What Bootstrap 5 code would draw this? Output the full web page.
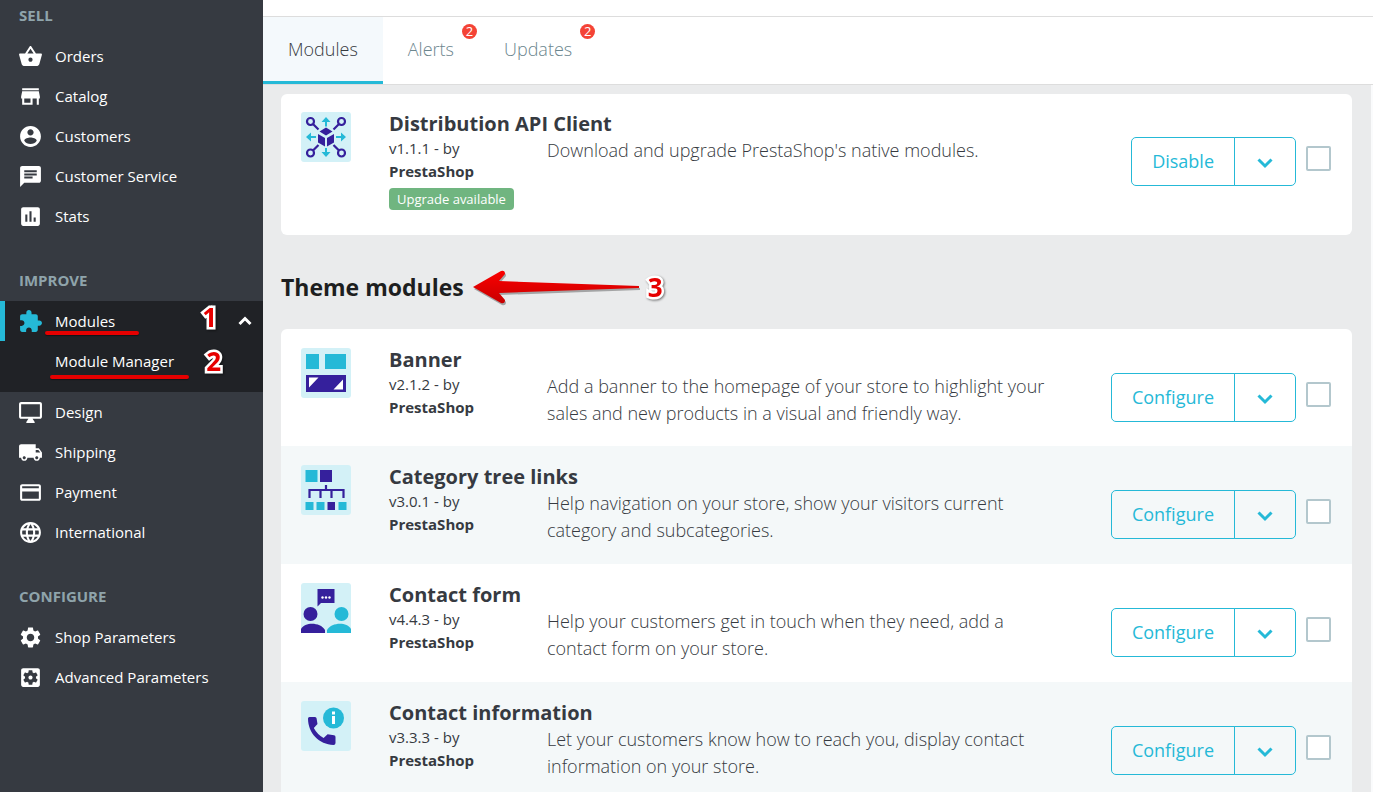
<!DOCTYPE html>
<html lang="en">
<head>
<meta charset="utf-8">
<meta name="viewport" content="width=device-width, initial-scale=1">
<title>Module Manager</title>
<link href="https://cdn.jsdelivr.net/npm/bootstrap@5.3.0/dist/css/bootstrap.min.css" rel="stylesheet">
<style>
  :root { --ps-blue: #25b9d7; --ps-dark: #363a41; --ps-red: #e60000; }
  body { font-family: "Open Sans", "Noto Sans", sans-serif; font-size: 18px; line-height: 27px; color: var(--ps-dark); }

  /* sidebar */
  .side-nav { width: 263px; padding-top: 5px; background: var(--ps-dark); font-size: 15px; line-height: 20px; }
  .side-title { color: #8fa4ab; font-size: 15px; line-height: 20px; font-weight: 700; padding: 0 19px; margin: 0 0 11px; }
  .side-group { margin-bottom: 34px; }
  .side-link { display: flex; align-items: center; height: 40px; padding: 0 10px 0 18px; color: #fff; text-decoration: none; }
  .side-link:hover { color: var(--ps-blue); }
  .side-link .glyph { width: 25px; height: 25px; fill: currentColor; margin-right: 12px; }
  .side-current { background: #202226; padding-bottom: 11px; }
  .side-current > .side-link:first-child { box-shadow: inset 5px 0 0 var(--ps-blue); }
  .side-current .glyph { fill: var(--ps-blue); }
  .side-current .side-sub { padding: 0 42px 0 55px; }

  /* tabs */
  .top-strip { height: 17px; border-bottom: 1px solid #dddddd; }
  .tab-strip { border-bottom: 1px solid #dddddd; }
  .tab-strip .nav-link { position: relative; height: 67px; padding: 19px 25px; font-weight: 340; color: #6c868e; border-bottom: 3px solid transparent; }
  .tab-strip .nav-link.active { color: var(--ps-dark); background: #f4f9fc; border-bottom-color: var(--ps-blue); }
  .tab-count { position: absolute; top: 7px; right: 2px; width: 15px; height: 15px; border-radius: 8px; background: #f44336; color: #fff; font-size: 13px; line-height: 15px; font-weight: 400; text-align: center; }

  /* modules */
  .content-pane { background: #eaebec; padding: 9px 19px 0 18px; border-right: 2px solid #fafbfc; scrollbar-width: none; }
  .section-title { font-size: 23px; line-height: 32px; font-weight: 700; color: #1d1e20; margin: 0; padding: 33px 0 23px; }
  .module-card { border: 0; border-radius: 6px; overflow: hidden; }
  .module-row { display: flex; padding: 19px 21px 19px 20px; min-height: 118px; }
  .module-row:first-child { min-height: 117px; }
  .module-row:only-child { padding-top: 18px; padding-bottom: 25px; }
  .module-row:nth-child(even) { background: #f4f8f9; }
  .module-logo { width: 50px; height: 50px; margin-right: 38px; flex: none; }
  .module-name { font-size: 20px; line-height: 23px; font-weight: 700; margin: 0 0 2px; white-space: nowrap; }
  .module-meta { width: 158px; flex: none; font-size: 15px; line-height: 23px; }
  .module-text { margin: 0; padding-right: 48px; font-weight: 340; }
  .module-flag { font-size: 13px; line-height: 22px; font-weight: 400; padding: 0 8px; margin-top: 5px; background: #70b580; border-radius: 4px; display: block; width: fit-content; }
  .module-actions { margin-top: 25px; display: flex; align-items: flex-start; flex: none; }
  .btn-ps { --bs-btn-color: var(--ps-blue); --bs-btn-border-color: var(--ps-blue); --bs-btn-hover-bg: var(--ps-blue); --bs-btn-hover-color: #fff; --bs-btn-font-size: 18px; --bs-btn-font-weight: 500; --bs-btn-line-height: 27px; --bs-btn-padding-y: 10px; --bs-btn-padding-x: 20px; --bs-btn-border-radius: 5px; }
  .btn-ps svg { width: 20px; height: 12px; }
  .module-tick { width: 25px; height: 25px; margin: 9px 0 0 10px; }
  .module-tick.form-check-input { border: 2px solid #b3c7cd; border-radius: 2px; }

  /* tutorial marks drawn over the page */
  .underline-mark { position: absolute; height: 4px; border-radius: 2px; background: var(--ps-red); box-shadow: 0 1px 1px rgba(0,0,0,.4); }
  .step-mark { font-family: "Open Sans", sans-serif; font-size: 26px; line-height: 30px; font-weight: 700; color: var(--ps-red); -webkit-text-stroke: 5px #fff; paint-order: stroke fill; filter: drop-shadow(1px 1px 1px rgba(0,0,0,.5)); }
</style>
</head>
<body>
<div class="d-flex vh-100 overflow-hidden">

  <nav class="side-nav flex-shrink-0 overflow-hidden" aria-label="Main menu">
    <div class="side-group">
      <h2 class="side-title">SELL</h2>
      <a class="side-link" href="#"><svg class="glyph" viewBox="0 0 24 24"><path d="M17.210 9l-4.380-6.560c-.19-.28-.51-.42-.83-.42-.32 0-.64.14-.83.43L6.790 9H2c-.55 0-1 .45-1 1 0 .09.01.18.04.27l2.540 9.270c.23.84 1 1.460 1.920 1.460h13c.92 0 1.690-.62 1.930-1.460l2.540-9.270L23 10c0-.55-.45-1-1-1h-4.790zM9 9l3-4.400L15 9H9zm3 8c-1.100 0-2-.9-2-2s.9-2 2-2 2 .9 2 2-.9 2-2 2z"/></svg>Orders</a>
      <a class="side-link" href="#"><svg class="glyph" viewBox="0 0 24 24"><path d="M20 4H4v2h16V4zm1 10v-2l-1-5H4l-1 5v2h1v6h10v-6h4v6h2v-6h1zm-9 4H6v-4h6v4z"/></svg>Catalog</a>
      <a class="side-link" href="#"><svg class="glyph" viewBox="0 0 24 24"><path d="M12 2C6.480 2 2 6.480 2 12s4.480 10 10 10 10-4.480 10-10S17.520 2 12 2zm0 3c1.660 0 3 1.340 3 3s-1.340 3-3 3-3-1.340-3-3 1.340-3 3-3zm0 14.200c-2.500 0-4.710-1.280-6-3.220.03-1.990 4-3.080 6-3.080 1.990 0 5.970 1.090 6 3.080-1.290 1.940-3.500 3.220-6 3.220z"/></svg>Customers</a>
      <a class="side-link" href="#"><svg class="glyph" viewBox="0 0 24 24"><path d="M20 2H4c-1.100 0-1.990.9-1.990 2L2 22l4-4h14c1.100 0 2-.9 2-2V4c0-1.100-.9-2-2-2zM6 9h12v2H6V9zm8 5H6v-2h8v2zm4-6H6V6h12v2z"/></svg>Customer Service</a>
      <a class="side-link" href="#"><svg class="glyph" viewBox="0 0 24 24"><path d="M19 3H5c-1.100 0-2 .9-2 2v14c0 1.100.9 2 2 2h14c1.100 0 2-.9 2-2V5c0-1.100-.9-2-2-2zM9 17H7v-7h2v7zm4 0h-2V7h2v10zm4 0h-2v-4h2v4z"/></svg>Stats</a>
    </div>

    <div class="side-group">
      <h2 class="side-title">IMPROVE</h2>
      <div class="side-current">
        <a class="side-link position-relative" href="#"><svg class="glyph" viewBox="0 0 24 24"><path d="M20.500 11H19V7c0-1.100-.9-2-2-2h-4V3.500C13 2.120 11.880 1 10.500 1S8 2.120 8 3.500V5H4c-1.100 0-1.990.9-1.990 2v3.800H3.500c1.490 0 2.700 1.210 2.700 2.700s-1.210 2.700-2.700 2.700H2V20c0 1.100.9 2 2 2h3.800v-1.500c0-1.490 1.210-2.700 2.700-2.700 1.490 0 2.700 1.210 2.700 2.700V22H17c1.100 0 2-.9 2-2v-4h1.500c1.380 0 2.500-1.120 2.500-2.500S21.880 11 20.500 11z"/></svg>Modules
          <span class="step-mark ms-auto me-3 mb-2 pe-1">1</span>
          <svg width="16" height="10" viewBox="0 0 16 10" fill="none" stroke="#fff" stroke-width="3"><path d="M2.500 8L8 2.500 13.500 8"/></svg>
          <span class="underline-mark" style="left:45px;bottom:6px;width:94px"></span>
        </a>
        <a class="side-link side-sub position-relative" href="#">Module Manager
          <span class="step-mark ms-auto">2</span>
          <span class="underline-mark" style="left:50px;bottom:2px;width:139px"></span>
        </a>
      </div>
      <a class="side-link" href="#"><svg class="glyph" viewBox="0 0 24 24"><path d="M21 2H3c-1.100 0-2 .9-2 2v12c0 1.100.9 2 2 2h7l-2 3v1h8v-1l-2-3h7c1.100 0 2-.9 2-2V4c0-1.100-.9-2-2-2zm0 14H3V4h18v12z"/></svg>Design</a>
      <a class="side-link" href="#"><svg class="glyph" viewBox="0 0 24 24"><path d="M20 8h-3V4H3c-1.100 0-2 .9-2 2v11h2c0 1.660 1.340 3 3 3s3-1.340 3-3h6c0 1.660 1.340 3 3 3s3-1.340 3-3h2v-5l-3-4zM6 18.500c-.83 0-1.500-.67-1.500-1.500s.67-1.500 1.500-1.500 1.500.67 1.500 1.500-.67 1.500-1.500 1.500zm13.500-9l1.960 2.500H17V9.500h2.500zm-1.500 9c-.83 0-1.500-.67-1.500-1.500s.67-1.500 1.500-1.500 1.500.67 1.500 1.500-.67 1.500-1.500 1.500z"/></svg>Shipping</a>
      <a class="side-link" href="#"><svg class="glyph" viewBox="0 0 24 24"><path d="M20 4H4c-1.110 0-1.990.89-1.990 2L2 18c0 1.110.89 2 2 2h16c1.110 0 2-.89 2-2V6c0-1.110-.89-2-2-2zm0 14H4v-7h16v7zm0-10H4V6h16v2z"/></svg>Payment</a>
      <a class="side-link" href="#"><svg class="glyph" viewBox="0 0 24 24"><path d="M11.990 2C6.470 2 2 6.480 2 12s4.470 10 9.990 10C17.520 22 22 17.520 22 12S17.520 2 11.990 2zm6.930 6h-2.950c-.32-1.250-.78-2.450-1.380-3.560 1.840.63 3.370 1.910 4.330 3.560zM12 4.040c.83 1.200 1.480 2.530 1.910 3.960h-3.820c.43-1.430 1.080-2.760 1.910-3.960zM4.260 14C4.100 13.360 4 12.690 4 12s.1-1.360.26-2h3.380c-.08.66-.14 1.320-.14 2 0 .68.06 1.340.14 2H4.260zm.82 2h2.950c.32 1.250.78 2.450 1.380 3.560-1.840-.63-3.370-1.900-4.330-3.560zm2.950-8H5.080c.96-1.660 2.490-2.930 4.330-3.560C8.810 5.550 8.350 6.750 8.030 8zM12 19.960c-.83-1.200-1.480-2.530-1.910-3.960h3.820c-.43 1.430-1.080 2.760-1.910 3.960zM14.340 14H9.660c-.09-.66-.16-1.320-.16-2 0-.68.07-1.350.16-2h4.680c.09.65.16 1.320.16 2 0 .68-.07 1.340-.16 2zm.25 5.560c.6-1.110 1.060-2.310 1.380-3.560h2.950c-.96 1.650-2.490 2.930-4.330 3.560zM16.360 14c.08-.66.14-1.320.14-2 0-.68-.06-1.340-.14-2h3.380c.16.64.26 1.310.26 2s-.1 1.360-.26 2h-3.380z"/></svg>International</a>
    </div>

    <div>
      <h2 class="side-title">CONFIGURE</h2>
      <a class="side-link" href="#"><svg class="glyph" viewBox="0 0 24 24"><path d="M19.140 12.940c.04-.3.06-.61.06-.94 0-.32-.02-.64-.07-.94l2.030-1.580c.18-.14.23-.41.12-.61l-1.920-3.320c-.12-.22-.37-.29-.59-.22l-2.390.96c-.5-.38-1.030-.7-1.620-.94l-.36-2.540c-.04-.24-.24-.41-.48-.41h-3.840c-.24 0-.43.17-.47.41l-.36 2.540c-.59.24-1.130.57-1.620.94l-2.390-.96c-.22-.08-.47 0-.59.22L2.740 8.870c-.12.21-.08.47.12.61l2.030 1.580c-.05.3-.09.63-.09.94s.02.64.07.94l-2.030 1.580c-.18.14-.23.41-.12.61l1.920 3.320c.12.22.37.29.59.22l2.390-.96c.5.38 1.030.7 1.620.94l.36 2.540c.05.24.24.41.48.41h3.840c.24 0 .44-.17.47-.41l.36-2.540c.59-.24 1.130-.56 1.620-.94l2.390.96c.22.08.47 0 .59-.22l1.920-3.320c.12-.22.07-.47-.12-.61l-2.010-1.580zM12 15.600c-1.980 0-3.600-1.620-3.600-3.600s1.620-3.600 3.600-3.600 3.600 1.620 3.600 3.600-1.620 3.600-3.600 3.600z"/></svg>Shop Parameters</a>
      <a class="side-link" href="#"><svg class="glyph" viewBox="0 0 24 24"><path d="M12 10c-1.100 0-2 .9-2 2s.9 2 2 2 2-.9 2-2-.9-2-2-2zm7-7H5c-1.110 0-2 .9-2 2v14c0 1.100.89 2 2 2h14c1.110 0 2-.9 2-2V5c0-1.100-.89-2-2-2zm-1.750 9c0 .23-.02.46-.05.68l1.480 1.160c.13.11.17.3.08.45l-1.400 2.420c-.09.15-.27.21-.43.15l-1.740-.7c-.36.28-.76.51-1.180.69l-.26 1.850c-.03.17-.18.3-.35.3h-2.800c-.17 0-.32-.13-.35-.29l-.26-1.850c-.43-.18-.82-.41-1.180-.69l-1.740.7c-.16.06-.34 0-.43-.15l-1.400-2.420c-.09-.15-.05-.34.08-.45l1.480-1.160c-.03-.23-.05-.46-.05-.69 0-.23.02-.46.05-.68l-1.480-1.160c-.13-.11-.17-.3-.08-.45l1.400-2.420c.09-.15.27-.21.43-.15l1.740.7c.36-.28.76-.51 1.180-.69l.26-1.850c.03-.17.18-.3.35-.3h2.800c.17 0 .32.13.35.29l.26 1.850c.43.18.82.41 1.180.69l1.740-.7c.16-.06.34 0 .43.15l1.400 2.420c.09.15.05.34-.08.45l-1.480 1.160c.03.23.05.46.05.69z"/></svg>Advanced Parameters</a>
    </div>
  </nav>

  <div class="d-flex flex-column flex-fill overflow-hidden">
    <header class="bg-white flex-shrink-0">
      <div class="top-strip"></div>
      <ul class="nav tab-strip">
        <li class="nav-item"><a class="nav-link active" aria-current="page" href="#">Modules</a></li>
        <li class="nav-item"><a class="nav-link" href="#">Alerts<span class="tab-count">2</span></a></li>
        <li class="nav-item"><a class="nav-link" href="#">Updates<span class="tab-count">2</span></a></li>
      </ul>
    </header>

    <main class="content-pane flex-fill overflow-auto">
      <section class="card module-card">
        <article class="module-row">
          <svg class="module-logo" viewBox="0 0 50 50"><rect width="50" height="50" rx="3" fill="#d3f1f7"/>
            <g stroke="#35209c" stroke-width="2.200" fill="none"><circle cx="9.500" cy="9.500" r="3.500"/><circle cx="40.500" cy="9.500" r="3.500"/><circle cx="9.500" cy="41" r="3.500"/><circle cx="40.500" cy="41" r="3.500"/><path d="M12 12l5.500 5.500M38 12l-5.500 5.500M12 38.500l5.500-5.500M38 38.500L32.500 33"/></g>
            <path fill="#35209c" d="M25 15.500l6.500 4-6.500 4-6.500-4zM17 22l7 4v8.500l-7-4zM33 22l-7 4v8.500l7-4z"/>
            <path fill="#25b9d7" d="M25 5l4.500 5H26v4.500h-2V10h-3.500zM25 45l4.500-5H26v-4h-2v4h-3.500zM5 25l5-4.500V24h5v2h-5v3.500zM45 25l-5-4.500V24h-5v2h5v3.500z"/></svg>
          <div class="flex-fill">
            <h3 class="module-name">Distribution API Client</h3>
            <div class="d-flex">
              <div class="module-meta">v1.1.1 - by<br><b>PrestaShop</b><span class="badge module-flag">Upgrade available</span></div>
              <p class="module-text">Download and upgrade PrestaShop's native modules.</p>
            </div>
          </div>
          <div class="module-actions">
            <div class="btn-group"><button type="button" class="btn btn-ps">Disable</button><button type="button" class="btn btn-ps" aria-label="More actions"><svg viewBox="0 0 20 12" fill="none" stroke="currentColor" stroke-width="3"><path d="M3.500 2.500L10 9l6.500-6.500"/></svg></button></div>
            <input class="form-check-input module-tick" type="checkbox" aria-label="Select Distribution API Client">
          </div>
        </article>
      </section>

      <h2 class="section-title d-flex align-items-center">Theme modules
        <svg class="ms-2 flex-shrink-0" width="168" height="38" viewBox="0 0 168 38"><defs><linearGradient id="arrowRed" x1="0" y1="0" x2="0" y2="1"><stop offset="0" stop-color="#fb0000"/><stop offset="1" stop-color="#c80000"/></linearGradient></defs><path fill="#000" opacity=".3" transform="translate(1 2)" d="M1 19L29 3q4-1 4 3l-6 7 140 5v2L27 25l6 7q0 4-4 3z"/><path fill="url(#arrowRed)" d="M1 19L29 3q4-1 4 3l-6 7 140 5v2L27 25l6 7q0 4-4 3z"/></svg>
        <span class="step-mark ms-2">3</span>
      </h2>

      <section class="card module-card">
        <article class="module-row">
          <svg class="module-logo" viewBox="0 0 50 50"><rect width="50" height="50" rx="3" fill="#d3f1f7"/><path fill="#25b9d7" d="M5 6h13v15H5zM24 6h21v15H24z"/><path fill="#35209c" d="M5 27h40v17H5z"/><path fill="#fff" d="M8 29.500h9.500L8 39.500zM42 31.500V41.500h-9.500z"/></svg>
          <div class="flex-fill">
            <h3 class="module-name">Banner</h3>
            <div class="d-flex">
              <div class="module-meta">v2.1.2 - by<br><b>PrestaShop</b></div>
              <p class="module-text">Add a banner to the homepage of your store to highlight your sales and new products in a visual and friendly way.</p>
            </div>
          </div>
          <div class="module-actions">
            <div class="btn-group"><button type="button" class="btn btn-ps">Configure</button><button type="button" class="btn btn-ps" aria-label="More actions"><svg viewBox="0 0 20 12" fill="none" stroke="currentColor" stroke-width="3"><path d="M3.500 2.500L10 9l6.500-6.500"/></svg></button></div>
            <input class="form-check-input module-tick" type="checkbox" aria-label="Select Banner">
          </div>
        </article>
        <article class="module-row">
          <svg class="module-logo" viewBox="0 0 50 50"><rect width="50" height="50" rx="3" fill="#d3f1f7"/><path fill="#25b9d7" d="M4.500 5h12v12h-12zM4.500 37h8v8h-8zM15.500 37h8v8h-8zM37.500 37h8v8h-8z"/><path fill="#35209c" d="M19 5h12v12H19zM26.500 37h7.500v8h-7.500z"/><path fill="none" stroke="#35209c" stroke-width="2.200" d="M25 20v5M8.500 33v-8h34v8M19.500 25v8M30.500 25v8"/></svg>
          <div class="flex-fill">
            <h3 class="module-name">Category tree links</h3>
            <div class="d-flex">
              <div class="module-meta">v3.0.1 - by<br><b>PrestaShop</b></div>
              <p class="module-text">Help navigation on your store, show your visitors current category and subcategories.</p>
            </div>
          </div>
          <div class="module-actions">
            <div class="btn-group"><button type="button" class="btn btn-ps">Configure</button><button type="button" class="btn btn-ps" aria-label="More actions"><svg viewBox="0 0 20 12" fill="none" stroke="currentColor" stroke-width="3"><path d="M3.500 2.500L10 9l6.500-6.500"/></svg></button></div>
            <input class="form-check-input module-tick" type="checkbox" aria-label="Select Category tree links">
          </div>
        </article>
        <article class="module-row">
          <svg class="module-logo" viewBox="0 0 50 50"><rect width="50" height="50" rx="3" fill="#d3f1f7"/><path fill="#35209c" d="M16.500 6H33.500v14H20l-3.500 3.500zM0 50v-4c4-7 19-7 24 1v3z"/><circle cx="9.500" cy="31" r="7" fill="#35209c"/><circle cx="40.500" cy="31" r="7" fill="#25b9d7"/><path fill="#25b9d7" d="M50 50v-4c-4-7-19-7-24 1v3z"/><g fill="#fff"><circle cx="21.500" cy="14.500" r="1.200"/><circle cx="25" cy="14.500" r="1.200"/><circle cx="28.500" cy="14.500" r="1.200"/></g></svg>
          <div class="flex-fill">
            <h3 class="module-name">Contact form</h3>
            <div class="d-flex">
              <div class="module-meta">v4.4.3 - by<br><b>PrestaShop</b></div>
              <p class="module-text">Help your customers get in touch when they need, add a contact form on your store.</p>
            </div>
          </div>
          <div class="module-actions">
            <div class="btn-group"><button type="button" class="btn btn-ps">Configure</button><button type="button" class="btn btn-ps" aria-label="More actions"><svg viewBox="0 0 20 12" fill="none" stroke="currentColor" stroke-width="3"><path d="M3.500 2.500L10 9l6.500-6.500"/></svg></button></div>
            <input class="form-check-input module-tick" type="checkbox" aria-label="Select Contact form">
          </div>
        </article>
        <article class="module-row">
          <svg class="module-logo" viewBox="0 0 50 50"><rect width="50" height="50" rx="3" fill="#d3f1f7"/><path fill="#35209c" d="M8.500 16h5.500q1.500 0 1.600 1.500l.9 5.500-3.700 4q3.500 6.500 9.800 10l4-3.700 6.400 1q1.500.2 1.500 1.700V42q0 2-2 2C18 43.500 7 32 7 17.500q0-1.500 1.500-1.500z"/><circle cx="32.500" cy="17" r="10.500" fill="#25b9d7"/><path fill="#fff" d="M31 10.500h3v3h-3zM31 15h3v8h-3z"/></svg>
          <div class="flex-fill">
            <h3 class="module-name">Contact information</h3>
            <div class="d-flex">
              <div class="module-meta">v3.3.3 - by<br><b>PrestaShop</b></div>
              <p class="module-text">Let your customers know how to reach you, display contact information on your store.</p>
            </div>
          </div>
          <div class="module-actions">
            <div class="btn-group"><button type="button" class="btn btn-ps">Configure</button><button type="button" class="btn btn-ps" aria-label="More actions"><svg viewBox="0 0 20 12" fill="none" stroke="currentColor" stroke-width="3"><path d="M3.500 2.500L10 9l6.500-6.500"/></svg></button></div>
            <input class="form-check-input module-tick" type="checkbox" aria-label="Select Contact information">
          </div>
        </article>
      </section>
    </main>
  </div>
</div>
<script src="https://cdn.jsdelivr.net/npm/bootstrap@5.3.0/dist/js/bootstrap.bundle.min.js"></script>
</body>
</html>
